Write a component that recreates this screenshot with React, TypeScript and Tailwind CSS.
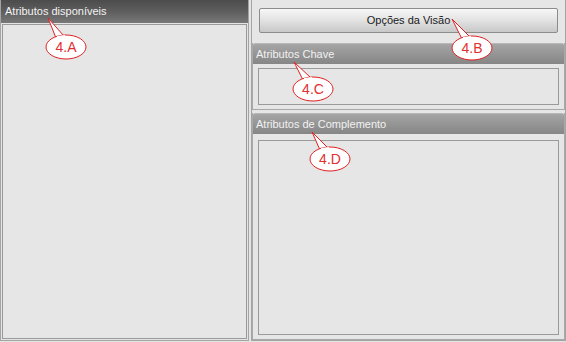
import React from "react";

function Callout({ label, x, y, tx, ty }: { label: string; x: number; y: number; tx: number; ty: number }) {
  // x,y = ellipse centre, tx,ty = pointer tip
  return (
    <svg className="absolute left-0 top-0 pointer-events-none" width={566} height={342}>
      <path
        d={`M${x - 10} ${y - 9} L${tx} ${ty} L${x - 2} ${y - 11}`}
        fill="#fff"
        stroke="#e02020"
        strokeWidth={1}
      />
      <ellipse cx={x} cy={y} rx={20} ry={12} fill="#fff" stroke="#e02020" strokeWidth={1} />
      <path d={`M${x - 9} ${y - 10} L${x - 1} ${y - 11}`} stroke="#fff" strokeWidth={2} />
      <text
        x={x}
        y={y + 5}
        textAnchor="middle"
        fontFamily="'Liberation Sans', Arial, sans-serif"
        fontSize={14}
        fill="#e23030"
      >
        {label}
      </text>
    </svg>
  );
}

function GroupHeader({ title }: { title: string }) {
  return (
    <div className="h-[21px] shrink-0 rounded-t-[2px] border-t border-[#b8b8b8] bg-gradient-to-b from-[#a6a6a6] via-[#959595] to-[#868686] pl-[3px] text-[11px] leading-[20px] text-[#f2f2f2]">
      {title}
    </div>
  );
}

export default function App() {
  return (
    <div
      className="relative flex h-[342px] w-[566px] gap-[2px] bg-[#e4e4e4] pb-[1px]"
      style={{ fontFamily: "'Liberation Sans', Arial, sans-serif" }}
    >
      {/* Left panel */}
      <div className="flex w-[249px] flex-col border border-[#a4a4a4] border-t-0">
        <div className="h-[23px] shrink-0 bg-gradient-to-b from-[#4c4c4c] via-[#5e5e5e] to-[#787878] pl-[4px] text-[11px] leading-[23px] text-[#f4f4f4]">
          Atributos disponíveis
        </div>
        <div className="flex flex-1 p-[1px]">
          <div className="flex-1 border border-[#9a9a9a] bg-[#e6e6e6]" />
        </div>
      </div>

      {/* Right panel */}
      <div className="flex flex-1 flex-col border border-[#a4a4a4] border-t-0 bg-[#e6e6e6]">
        <div className="px-[7px] pb-[10px] pt-[8px]">
          <div className="h-[25px] rounded-[2px] border border-[#8c8c8c] bg-gradient-to-b from-[#f7f7f7] via-[#e2e2e2] to-[#c8c8c8] text-center text-[11px] leading-[23px] text-[#1a1a1a]">
            Opções da Visão
          </div>
        </div>

        <div className="flex flex-col border border-[#a8a8a8] border-t-0">
          <GroupHeader title="Atributos Chave" />
          <div className="px-[5px] py-[4px]">
            <div className="h-[37px] border border-[#9a9a9a] bg-[#e6e6e6]" />
          </div>
        </div>

        <div className="mt-[3px] flex flex-1 flex-col border border-[#a8a8a8] border-t-0">
          <GroupHeader title="Atributos de Complemento" />
          <div className="flex flex-1 px-[5px] pb-[4px] pt-[6px]">
            <div className="flex-1 border border-[#9a9a9a] bg-[#e6e6e6]" />
          </div>
        </div>
      </div>

      <Callout label="4.A" x={66} y={47} tx={48} ty={18} />
      <Callout label="4.B" x={472} y={48} tx={452} ty={19} />
      <Callout label="4.C" x={313} y={89} tx={294} ty={62} />
      <Callout label="4.D" x={330} y={159} tx={312} ty={132} />
    </div>
  );
}
